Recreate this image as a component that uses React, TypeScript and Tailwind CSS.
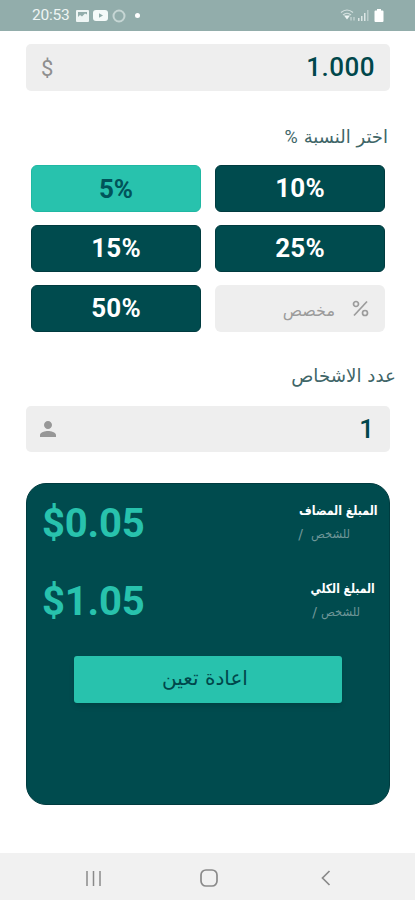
import React, { useState } from 'react';

const percentages = [5, 10, 15, 25, 50];

interface AmountProps {
  title: string;
  value: string;
  titleClass: string;
  personClass: string;
  slashClass: string;
}

const StatusBar = () => {
  return (
    <header className="flex h-[31px] items-center justify-between bg-[#92adab] pl-8 pr-[31px] text-[#eef5f4]">
      <div className="flex items-center">
        <span className="w-[38px] text-[15.5px] leading-none tracking-[-0.2px]">20:53</span>
        <svg className="ml-[6px]" width="13" height="12" viewBox="0 0 13 12" fill="currentColor">
          <path fillRule="evenodd" d="M1 0h11a1 1 0 0 1 1 1v10a1 1 0 0 1-1 1H1a1 1 0 0 1-1-1V1a1 1 0 0 1 1-1Zm1 2v5l2-2 2 1.500 3-3 2 1V2Z" />
        </svg>
        <svg className="ml-[4px]" width="15" height="11" viewBox="0 0 15 11">
          <rect width="15" height="11" rx="3" fill="#f5faf9" />
          <path d="M6 3.200v4.600l4-2.300Z" fill="#92adab" />
        </svg>
        <svg className="ml-[4px]" width="14" height="14" viewBox="0 0 14 14" fill="none">
          <circle cx="7" cy="7" r="5.500" stroke="#c6d6d4" strokeWidth="2" />
        </svg>
        <span className="ml-[9px] size-[5px] rounded-full bg-white" />
      </div>
      <div className="flex items-center">
        <svg width="16" height="13" viewBox="0 0 16 13" fill="none" stroke="#d5e1e0" strokeWidth="1.200">
          <path d="M1 3.500Q7 -1.500 13 3.500M3 6q4-3.500 8 0" />
          <path d="M4 6.500h6L7 10.500Z" fill="#eef5f4" stroke="none" />
          <path d="M11 8v3.500M14 8v3.500" strokeWidth="1" />
        </svg>
        <svg className="ml-[1px]" width="12" height="11" viewBox="0 0 12 11">
          <path d="M1 8h1.500v3H1ZM4 6h1.500v5H4ZM7 3h1.500v8H7Z" fill="#dce6e5" />
          <path d="M10 0h1.500v11H10Z" fill="#b9cbca" />
        </svg>
        <svg className="ml-[5px]" width="10" height="13" viewBox="0 0 10 13" fill="#fff">
          <path d="M3 0h4v1.500h1.500a1 1 0 0 1 1 1V12a1 1 0 0 1-1 1h-7a1 1 0 0 1-1-1V2.500a1 1 0 0 1 1-1H3Z" />
        </svg>
      </div>
    </header>
  );
};

const Amount = ({ title, value, titleClass, personClass, slashClass }: AmountProps) => {
  return (
    <div className="flex h-[78px] items-start justify-between">
      <span className="text-[40px] font-bold leading-[47px] tracking-[-0.2px] text-[#28c2ad]" dir="ltr">{value}</span>
      <div className="flex flex-col items-start font-['DejaVu_Sans',sans-serif]" dir="rtl">
        <span className={titleClass}>{title}</span>
        <div className={personClass}>
          <span>للشخص</span>
          <span className={slashClass}>/</span>
        </div>
      </div>
    </div>
  );
};

const NavigationBar = () => {
  return (
    <nav className="mt-auto flex h-[47px] items-center bg-[#f1f1f1] pl-[85px] pt-[3px] text-[#8a8a8a]">
      <svg width="17" height="17" viewBox="0 0 17 17" fill="none" stroke="currentColor" strokeWidth="1.500">
        <path d="M2 1v15M8.500 1v15M15 1v15" />
      </svg>
      <svg className="ml-[98px]" width="18" height="18" viewBox="0 0 18 18" fill="none" stroke="currentColor" strokeWidth="1.700">
        <rect x="1" y="1" width="16" height="16" rx="5" />
      </svg>
      <svg className="ml-[103px]" width="10" height="16" viewBox="0 0 10 16" fill="none" stroke="currentColor" strokeWidth="1.700">
        <path d="M8.500 1 1.500 8l7 7" />
      </svg>
    </nav>
  );
};

const App = () => {
  const [selected, setSelected] = useState<number>(5);

  return (
    <div className="flex h-[900px] w-full flex-col overflow-hidden bg-white font-[Roboto,sans-serif]">
      <StatusBar />

      <main className="flex flex-col pl-[26px] pr-[25px] pt-[13px]">
        <div className="flex h-[47px] items-center justify-between rounded-[5px] bg-[#eeeeee] pl-[15px] pr-[15px]">
          <span className="pt-px text-[22px] text-[#8f8f8f]">$</span>
          <span className="text-[26px] font-medium tracking-[0.5px] text-[#00474b]">1.000</span>
        </div>

        <div className="mt-[29px] flex h-8 items-center pr-[2px] font-['DejaVu_Sans',sans-serif] text-[18px] text-[#3f6668]" dir="rtl">
          <span>اختر النسبة</span>
          <span className="mr-[6px] font-[Roboto,sans-serif]">%</span>
        </div>

        <div className="ml-[5px] mr-[5px] mt-[13px] grid grid-cols-2 gap-x-[14px] gap-y-[13px]">
          {percentages.map(item => (
            <button
              key={item}
              type="button"
              onClick={() => setSelected(item)}
              className={selected === item
                ? "h-[47px] rounded-[6px] border border-[#20b8a3] bg-[#28c2ad] pt-px text-[26px] font-bold text-[#00535a]"
                : "h-[47px] rounded-[6px] border border-[#003b3f] bg-[#004b4e] text-[26px] font-bold tracking-[0.2px] text-white"}
            >
              {item}%
            </button>
          ))}
          <div className="flex h-[47px] items-center rounded-[6px] bg-[#eeeeee] pr-[16px] text-[#9b9b9b]" dir="rtl">
            <svg width="17" height="17" viewBox="0 0 17 17" fill="none" stroke="currentColor" strokeWidth="1.700">
              <circle cx="4" cy="4" r="2.500" />
              <circle cx="13" cy="13" r="2.500" />
              <path d="M15 1.500 2 15.500" />
            </svg>
            <span className="mr-[17px] mt-1 font-['DejaVu_Sans',sans-serif] text-[16px]">مخصص</span>
          </div>
        </div>

        <div className="-mr-[6px] mt-[28px] flex h-8 items-center font-['DejaVu_Sans',sans-serif] text-[18.300px] text-[#3f6668]" dir="rtl">
          <span>عدد الاشخاص</span>
        </div>

        <div className="mt-[14px] flex h-[46px] items-center justify-between rounded-[5px] bg-[#eeeeee] pl-[10px] pr-4">
          <svg width="24" height="24" viewBox="0 0 24 24" fill="#979797">
            <path d="M12 12c2.210 0 4-1.790 4-4s-1.790-4-4-4-4 1.790-4 4 1.790 4 4 4Zm0 2c-2.670 0-8 1.340-8 4v2h16v-2c0-2.660-5.330-4-8-4Z" />
          </svg>
          <span className="text-[26px] font-medium text-[#00474b]">1</span>
        </div>

        <section className="mt-[31px] flex h-[322px] flex-col rounded-[20px] border border-[#003b3f] bg-[#004b4e] pl-[15px] pr-[11px] pt-[16px]">
          <Amount
            title="المبلغ المضاف"
            value="$0.05"
            titleClass="origin-right scale-x-[0.94] font-['DejaVu_Sans_Condensed','DejaVu_Sans',sans-serif] text-[13px] font-bold leading-[22px] tracking-[-0.3px] text-white [font-stretch:condensed]"
            personClass="mr-[28px] flex text-[11.5px] leading-6 text-[#6f9698]"
            slashClass="mr-2 text-[14px]"
          />
          <Amount
            title="المبلغ الكلي"
            value="$1.05"
            titleClass="mr-[3px] origin-right scale-x-[0.92] font-['DejaVu_Sans_Condensed','DejaVu_Sans',sans-serif] text-[13px] font-bold leading-[22px] tracking-[-0.3px] text-white [font-stretch:condensed]"
            personClass="mr-[18px] flex text-[11.5px] leading-6 text-[#6f9698]"
            slashClass="mr-[4px] text-[14px]"
          />
          <button
            type="button"
            className="ml-8 h-[47px] w-[268px] rounded-[3px] bg-[#28c2ad] pb-1 pr-[6px] font-['DejaVu_Sans',sans-serif] text-[20px] text-[#00474b] shadow-md"
            dir="rtl"
          >
            اعادة تعين
          </button>
        </section>
      </main>

      <NavigationBar />
    </div>
  );
};

export default App;
